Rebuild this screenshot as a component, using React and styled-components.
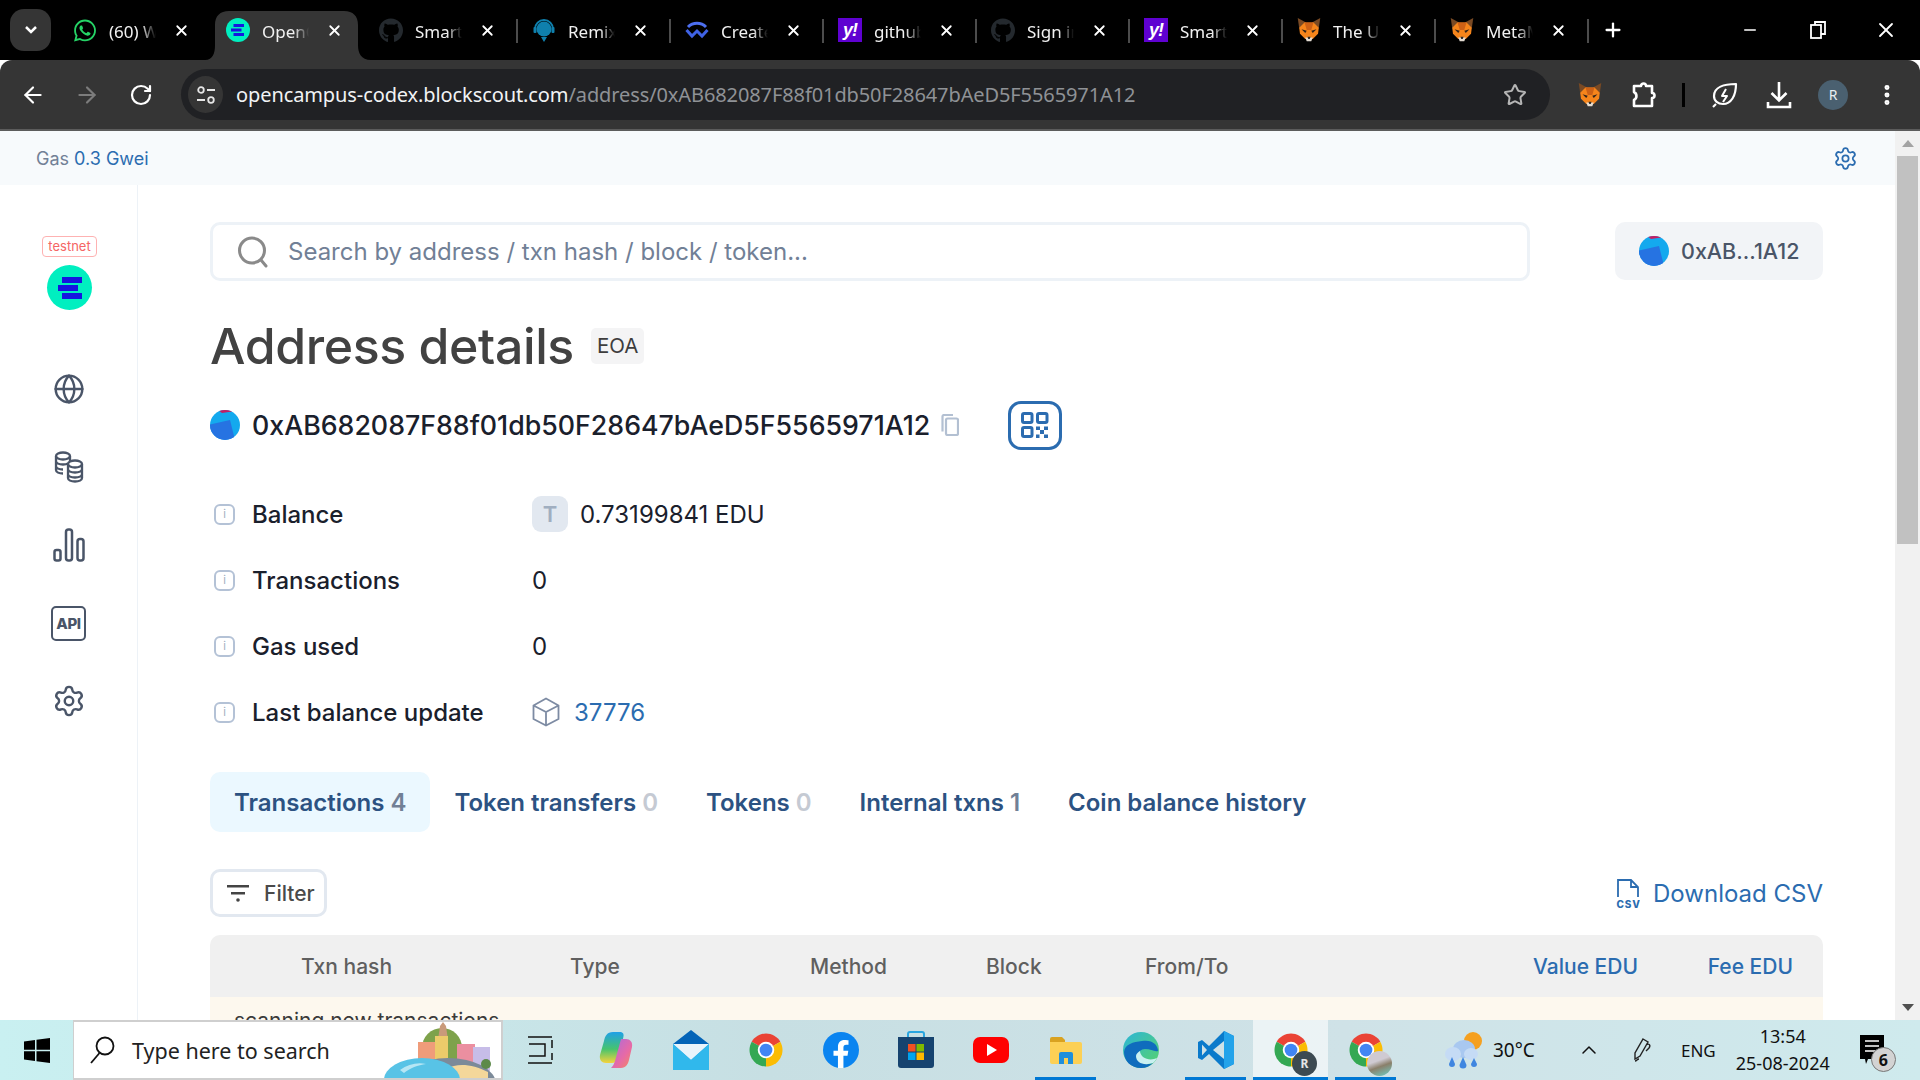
import React from 'react';
import styled, { createGlobalStyle } from 'styled-components';
import { ArrowLeft, ArrowRight, RotateCw, Star, X, Minus, Plus, Globe, Settings, MoreVertical, ChevronUp } from 'lucide-react';
import { FaGithub, FaWhatsapp, FaFacebookF } from 'react-icons/fa';

const GlobalStyle = createGlobalStyle`
  html, body { margin: 0; padding: 0; overflow: hidden; background: #fff; }
  * { box-sizing: border-box; }
`;

const Shell = styled.div`
  width: 1920px;
  height: 1080px;
  display: flex;
  flex-direction: column;
  overflow: hidden;
  font-family: Inter, "Liberation Sans", sans-serif;
`;

/* ---------- browser chrome ---------- */

const TabBar = styled.div`
  height: 60px;
  flex: none;
  background: #000;
  display: flex;
  align-items: flex-start;
  padding-left: 10px;
  font-family: "Noto Sans", sans-serif;
  color: #fff;
`;

const TabSearch = styled.div`
  width: 41px;
  height: 42px;
  margin: 9px 6px 0 0;
  border-radius: 14px;
  background: #353535;
  display: flex;
  align-items: center;
  justify-content: center;
`;

const Tab = styled.div`
  position: relative;
  width: 153px;
  height: 49px;
  margin-top: 11px;
  padding: 0 0 11px 16px;
  display: flex;
  align-items: center;
  &::before {
    content: "";
    position: absolute;
    left: 0;
    top: 8px;
    width: 2px;
    height: 24px;
    background: ${p => (p.$sep ? '#4c4c4c' : 'transparent')};
  }
  ${p => p.$active && `
    &::after {
      content: "";
      position: absolute;
      z-index: 0;
      left: -5px;
      top: 0;
      width: 166px;
      height: 49px;
      background: #353535;
      clip-path: path('M0 49C8 49 10 42 10 34V14C10 5 15 0 24 0H139C148 0 153 5 153 14V34C153 42 156 49 166 49Z');
    }
  `}
`;

const TabIcon = styled.span`
  position: relative;
  z-index: 1;
  width: 24px;
  height: 24px;
  flex: none;
  display: flex;
  align-items: center;
  justify-content: center;
`;

const TabTitle = styled.span`
  position: relative;
  z-index: 1;
  width: 47px;
  margin-left: 12px;
  font-size: 17px;
  line-height: 24px;
  margin-top: 4px;
  white-space: nowrap;
  overflow: hidden;
  color: #f1f1f1;
  -webkit-mask-image: linear-gradient(90deg, #000 68%, transparent 100%);
  mask-image: linear-gradient(90deg, #000 68%, transparent 100%);
`;

const TabClose = styled.span`
  position: relative;
  z-index: 1;
  margin-left: 17px;
  display: flex;
`;

const NewTab = styled.div`
  width: 52px;
  height: 60px;
  border-left: 0;
  display: flex;
  align-items: center;
  justify-content: center;
  position: relative;
  &::before {
    content: "";
    position: absolute;
    left: 0;
    top: 19px;
    width: 2px;
    height: 24px;
    background: #4c4c4c;
  }
`;

const WindowControls = styled.div`
  margin-left: auto;
  display: flex;
`;

const WindowButton = styled.div`
  width: 68px;
  height: 60px;
  display: flex;
  align-items: center;
  justify-content: center;
`;

const Toolbar = styled.div`
  height: 71px;
  flex: none;
  background: #353535;
  border-bottom: 2px solid #5c5c5c;
  border-radius: 12px 12px 0 0;
  display: flex;
  align-items: center;
  padding-left: 6px;
  font-family: "Noto Sans", sans-serif;
  position: relative;
  &::before {
    content: "";
    position: absolute;
    inset: 0 0 auto 0;
    height: 12px;
    z-index: -1;
    background: #000;
  }
`;

const ToolSlot = styled.div`
  width: 54px;
  height: 51px;
  flex: none;
  display: flex;
  align-items: center;
  justify-content: center;
  color: #fff;
`;

const Omnibox = styled.div`
  width: 1369px;
  height: 51px;
  margin: 0 13px;
  border-radius: 26px;
  background: #202124;
  display: flex;
  align-items: center;
  padding-left: 7px;
  flex: none;
`;

const SiteInfo = styled.div`
  width: 35px;
  height: 37px;
  border-radius: 50%;
  background: #353535;
  display: flex;
  align-items: center;
  justify-content: center;
  flex: none;
`;

const Url = styled.div`
  margin-left: 13px;
  font-size: 20px;
  line-height: 28px;
  color: #8f9296;
  white-space: nowrap;
  letter-spacing: -0.1px;
  b { font-weight: 400; color: #f1f3f4; }
`;

const StarSlot = styled.div`
  margin-left: auto;
  margin-right: 23px;
  display: flex;
`;

const ToolSep = styled.div`
  width: 3px;
  height: 24px;
  margin: 0 13px 0 11px;
  background: #000;
  flex: none;
`;

const Avatar = styled.div`
  width: 30px;
  height: 30px;
  border-radius: 50%;
  background: #4a6070;
  color: #e8eef2;
  font-size: 14px;
  display: flex;
  align-items: center;
  justify-content: center;
`;

/* ---------- page ---------- */

const Viewport = styled.div`
  flex: 1;
  min-height: 0;
  display: flex;
  background: #fff;
`;

const Page = styled.div`
  width: 1895px;
  display: flex;
  flex-direction: column;
  overflow: hidden;
`;

const Scrollbar = styled.div`
  width: 25px;
  flex: none;
  background: #f1f1f1;
  display: flex;
  flex-direction: column;
  align-items: center;
`;

const ScrollArrow = styled.div`
  height: 25px;
  flex: none;
  display: flex;
  align-items: center;
  justify-content: center;
  margin-top: ${p => (p.$down ? 'auto' : '0')};
  &::before {
    content: "";
    border-left: 6px solid transparent;
    border-right: 6px solid transparent;
    ${p => (p.$down ? 'border-top: 7px solid #505050;' : 'border-bottom: 7px solid #a3a3a3;')}
  }
`;

const ScrollThumb = styled.div`
  width: 21px;
  height: 388px;
  background: #c1c1c1;
`;

const GasBar = styled.div`
  height: 54px;
  flex: none;
  background: #f7fafc;
  display: flex;
  align-items: center;
  justify-content: space-between;
  padding: 0 37px 0 36px;
  font-size: 18px;
  color: #718096;
  span { color: #2b6cb0; }
`;

const Body = styled.div`
  flex: 1;
  min-height: 0;
  display: flex;
  overflow: hidden;
`;

const Sidebar = styled.nav`
  width: 138px;
  flex: none;
  border-right: 1px solid #edf2f7;
  display: flex;
  flex-direction: column;
  align-items: center;
  padding-top: 51px;
`;

const TestnetBadge = styled.div`
  height: 21px;
  width: 55px;
  margin-left: 2px;
  border: 1px solid #feb2b2;
  border-radius: 4px;
  color: #f56565;
  font-size: 13px;
  line-height: 19px;
  text-align: center;
`;

const Logo = styled.div`
  width: 45px;
  height: 45px;
  margin: 8px 0 0 2px;
  border-radius: 50%;
  background: #00efc0;
  display: flex;
  flex-direction: column;
  align-items: center;
  justify-content: center;
  gap: 2px;
`;

const LogoBar = styled.span`
  display: block;
  width: 20px;
  height: 6px;
  background: #1515e0;
  transform: translateX(${p => (p.$left ? '-2px' : '2px')});
`;

const NavList = styled.div`
  margin-top: 40px;
  display: flex;
  flex-direction: column;
`;

const NavItem = styled.div`
  width: 60px;
  height: 78px;
  display: flex;
  align-items: center;
  justify-content: center;
  color: #4a5568;
`;

const ApiMark = styled.div`
  width: 35px;
  height: 35px;
  border: 2px solid #4a5568;
  border-radius: 5px;
  color: #4a5568;
  font-size: 15px;
  font-weight: 800;
  letter-spacing: -0.3px;
  display: flex;
  align-items: center;
  justify-content: center;
`;

const Main = styled.main`
  flex: 1;
  min-width: 0;
  padding: 37px 72px 0 72px;
`;

const TopRow = styled.div`
  display: flex;
  justify-content: space-between;
`;

const SearchBox = styled.div`
  width: 1320px;
  height: 59px;
  border: 3px solid #edf2f7;
  border-radius: 10px;
  display: flex;
  align-items: center;
  padding-left: 24px;
  gap: 19px;
  font-size: 24px;
  color: #718096;
`;

const WalletButton = styled.div`
  width: 208px;
  height: 58px;
  border-radius: 10px;
  background: #f2f4f7;
  display: flex;
  align-items: center;
  padding-left: 24px;
  gap: 12px;
  font-size: 21.5px;
  font-weight: 500;
  color: #4a5568;
`;

const HeadingRow = styled.div`
  margin-top: 35px;
  height: 60px;
  display: flex;
  align-items: center;
`;

const Heading = styled.h1`
  margin: 0;
  font-size: 50px;
  font-weight: 500;
  line-height: 60px;
  letter-spacing: -0.4px;
  color: #424242;
`;

const Tag = styled.span`
  margin-left: 17px;
  height: 36px;
  padding: 0 6px;
  border-radius: 5px;
  background: #f4f4f5;
  font-size: 20.5px;
  line-height: 36px;
  color: #3d3d3d;
`;

const AddressRow = styled.div`
  margin-top: 24px;
  height: 50px;
  display: flex;
  align-items: center;
`;

const AddressText = styled.span`
  margin-left: 12px;
  font-size: 26.75px;
  font-weight: 500;
  color: #1a202c;
  white-space: nowrap;
`;

const CopyMark = styled.span`
  margin-left: 11px;
  display: flex;
`;

const QrButton = styled.div`
  margin-left: 49px;
  width: 54px;
  height: 49px;
  border: 3px solid #2b6cb0;
  border-radius: 13px;
  display: flex;
  align-items: center;
  justify-content: center;
`;

const Details = styled.div`
  margin-top: 31px;
  display: flex;
  flex-direction: column;
`;

const DetailRow = styled.div`
  height: 66px;
  display: grid;
  grid-template-columns: 322px 1fr;
  align-items: center;
  font-size: 24px;
  color: #1a202c;
`;

const DetailLabel = styled.div`
  display: flex;
  align-items: center;
  gap: 17px;
  padding-left: 4px;
  font-weight: 500;
`;

const InfoMark = styled.span`
  width: 21px;
  height: 21px;
  border: 2px solid #b4c2d6;
  border-radius: 6px;
  display: flex;
  align-items: center;
  justify-content: center;
  color: #a0aec0;
  font-size: 11px;
  font-weight: 400;
  line-height: 1;
`;

const DetailValue = styled.div`
  display: flex;
  align-items: center;
  gap: 12px;
`;

const TokenMark = styled.span`
  width: 36px;
  height: 36px;
  border-radius: 9px;
  background: #e2e8f0;
  color: #a0aec0;
  font-size: 22px;
  font-weight: 600;
  display: flex;
  align-items: center;
  justify-content: center;
`;

const BlockLink = styled.span`
  margin-left: 2px;
  color: #2b6cb0;
`;

const Tabs = styled.div`
  margin-top: 27px;
  display: flex;
`;

const PageTab = styled.div`
  height: 60px;
  padding: 0 24px;
  border-radius: 10px;
  background: ${p => (p.$active ? '#ebf8ff' : 'transparent')};
  display: flex;
  align-items: center;
  gap: 6px;
  font-size: 24px;
  font-weight: 600;
  color: #2c5282;
  white-space: nowrap;
`;

const TabCount = styled.span`
  color: ${p => (p.$muted ? '#c5cad3' : '#718096')};
`;

const ActionBar = styled.div`
  margin-top: 37px;
  height: 48px;
  display: flex;
  align-items: center;
  justify-content: space-between;
`;

const FilterButton = styled.div`
  width: 117px;
  height: 48px;
  border: 3px solid #e2e8f0;
  border-radius: 10px;
  display: flex;
  align-items: center;
  padding-left: 13px;
  gap: 14px;
  font-size: 21px;
  font-weight: 500;
  color: #4a4a4a;
`;

const DownloadLink = styled.div`
  display: flex;
  align-items: center;
  gap: 13px;
  font-size: 24px;
  color: #2b6cb0;
`;

const TableHead = styled.div`
  margin-top: 18px;
  width: 1613px;
  height: 62px;
  padding-left: 91px;
  background: #f0f0f0;
  border-radius: 10px 10px 0 0;
  display: grid;
  grid-template-columns: 269px 240px 176px 159px 251px 242px 155px;
  align-items: center;
  font-size: 21px;
  font-weight: 500;
  color: #5f5f5f;
`;

const HeadCell = styled.div`
  ${p => p.$right && `
    text-align: right;
    color: #2b6cb0;
  `}
`;

const NoticeRow = styled.div`
  width: 1613px;
  padding: 12px 24px;
  background: #fdf8ee;
  font-size: 21px;
  line-height: 24px;
  color: #3a3a3a;
`;

/* ---------- taskbar ---------- */

const Taskbar = styled.div`
  height: 60px;
  flex: none;
  display: flex;
  background: linear-gradient(90deg, #c9f0f1 0%, #c7dfe3 40%, #cfe2e7 70%, #cfeaed 100%);
  font-family: "Noto Sans", sans-serif;
  color: #111;
`;

const StartButton = styled.div`
  width: 73px;
  display: flex;
  align-items: center;
  justify-content: center;
  flex: none;
`;

const TaskSearch = styled.div`
  position: relative;
  width: 430px;
  flex: none;
  background: #fff;
  border: 2px solid #cfcfcf;
  border-left-width: 1px;
  display: flex;
  align-items: center;
  padding-left: 15px;
  gap: 17px;
  font-size: 21.5px;
  color: #222;
  overflow: hidden;
`;

const SearchArt = styled.svg`
  position: absolute;
  right: 5px;
  top: 0;
`;

const TaskIcons = styled.div`
  display: flex;
  flex: none;
`;

const TaskSlot = styled.div`
  position: relative;
  width: 75px;
  height: 60px;
  display: flex;
  align-items: center;
  justify-content: center;
  background: ${p => (p.$active ? 'rgba(255,255,255,0.6)' : 'transparent')};
  ${p => p.$open && `
    &::after {
      content: "";
      position: absolute;
      left: ${p.$active ? '0' : '7px'};
      right: ${p.$active ? '0' : '7px'};
      bottom: 0;
      height: 3px;
      background: #0078d4;
    }
  `}
`;

const ProfileBadge = styled.span`
  position: absolute;
  left: 39px;
  top: 31px;
  width: 25px;
  height: 25px;
  border-radius: 50%;
  background: ${p => p.$bg};
  color: #e6e6e6;
  font-size: 12px;
  font-weight: 700;
  display: flex;
  align-items: center;
  justify-content: center;
`;

const Tray = styled.div`
  display: flex;
  align-items: center;
  padding-left: 41px;
  flex: 1;
`;

const Temp = styled.span`
  margin-left: 11px;
  width: 44px;
  font-size: 19px;
  white-space: nowrap;
`;

const TraySlot = styled.span`
  margin-left: ${p => p.$gap}px;
  display: flex;
  flex: none;
  font-size: 17px;
`;

const Clock = styled.div`
  margin-left: 17px;
  width: 100px;
  text-align: center;
  font-size: 18px;
  line-height: 27px;
  white-space: nowrap;
`;

const NotifyWrap = styled.div`
  position: relative;
  margin-left: 27px;
  width: 26px;
  height: 30px;
`;

const NotifyCount = styled.span`
  position: absolute;
  left: 11px;
  top: 12px;
  width: 25px;
  height: 25px;
  border-radius: 50%;
  border: 1px solid #777;
  background: #d3d3d3;
  font-size: 16px;
  font-weight: 700;
  display: flex;
  align-items: center;
  justify-content: center;
`;

const YahooMark = styled.span`
  width: 24px;
  height: 24px;
  background: #5f01d1;
  color: #fff;
  font-size: 18px;
  font-weight: 800;
  font-style: italic;
  letter-spacing: -1px;
  display: flex;
  align-items: center;
  justify-content: center;
  font-family: "Liberation Sans", sans-serif;
`;

/* ---------- drawings ---------- */

const Fox = ({ size = 24 }) => (
  <svg width={size} height={size} viewBox="0 0 32 32">
    <polygon points="1,0 12,6 10,12 3,14" fill="#7a4a24" />
    <polygon points="31,0 20,6 22,12 29,14" fill="#7a4a24" />
    <polygon points="3,13 10,6 22,6 29,13 28,21 21,28 11,28 4,21" fill="#f6851b" />
    <polygon points="10,6 22,6 19,16 13,16" fill="#cd6116" />
    <polygon points="6,15 13,17 11,20" fill="#33241a" />
    <polygon points="26,15 19,17 21,20" fill="#33241a" />
    <polygon points="11,26 21,26 19,31 13,31" fill="#e4dcd2" />
    <polygon points="14,25 18,25 17,28 15,28" fill="#2a2a2a" />
  </svg>
);

const ChromeLogo = ({ size = 36 }) => (
  <svg width={size} height={size} viewBox="0 0 48 48">
    <path d="M24 24L43.05 13A22 22 0 0 0 4.95 13Z" fill="#ea4335" />
    <path d="M24 24L43.05 13A22 22 0 0 1 24 46Z" fill="#fbbc04" />
    <path d="M24 24L24 46A22 22 0 0 1 4.95 13Z" fill="#34a853" />
    <circle cx="24" cy="24" r="11" fill="#fff" />
    <circle cx="24" cy="24" r="8.5" fill="#4285f4" />
  </svg>
);

const OpenCampusMark = () => (
  <svg width="24" height="24" viewBox="0 0 24 24">
    <circle cx="12" cy="12" r="12" fill="#00efc0" />
    <rect x="7.500" y="6" width="10.500" height="3" fill="#1515e0" />
    <rect x="5" y="10.500" width="10.500" height="3" fill="#1515e0" />
    <rect x="7.500" y="15" width="10.500" height="3" fill="#1515e0" />
  </svg>
);

const RemixMark = () => (
  <svg width="24" height="26" viewBox="0 0 24 26">
    <path d="M3 12a9 9 0 0 1 18 0" fill="none" stroke="#0f80ad" strokeWidth="2" />
    <circle cx="12" cy="12" r="7.5" fill="#0f80ad" />
    <rect x="1.5" y="10" width="3" height="6" rx="1" fill="#0f80ad" />
    <rect x="19.5" y="10" width="3" height="6" rx="1" fill="#0f80ad" />
    <path d="M9 20l3 5 3-5z" fill="#0f80ad" />
  </svg>
);

const WalletMark = () => (
  <svg width="24" height="18" viewBox="0 0 24 18" fill="none" strokeWidth="3">
    <path d="M3 6C8 1 16 1 21 6" stroke="#4d6ff0" />
    <path d="M1.5 9L7 15l5-5 5 5 5.5-6" stroke="#3f62e4" />
  </svg>
);

const SearchGlyph = () => (
  <svg width="32" height="32" viewBox="0 0 32 32" fill="none" stroke="#8a8a8a" strokeWidth="3" strokeLinecap="round">
    <circle cx="15" cy="14.5" r="12.5" />
    <path d="M24 24l5 6" />
  </svg>
);

const AddressAvatar = ({ size = 30 }) => (
  <svg width={size} height={size} viewBox="0 0 30 30" style={{ borderRadius: '50%', flex: 'none' }}>
    <rect width="30" height="30" fill="#14a9ee" />
    <path d="M8 0h14v1.5L12 3z" fill="#c41e63" />
    <path d="M-2 15L20 10l5 20H0z" fill="#2673e2" />
    <path d="M22 30l8-9v9z" fill="#0b6a6e" />
  </svg>
);

const CoinsGlyph = () => (
  <svg width="30" height="32" viewBox="0 0 30 32" fill="none" stroke="currentColor" strokeWidth="2.300">
    <ellipse cx="9" cy="5" rx="7" ry="3.5" />
    <path d="M2 5v14c0 2 3 3.5 7 3.5M16 5v5M2 10c0 2 3 3.5 7 3.5 2 0 4-.4 5-1M2 15c0 2 3 3.5 7 3.5" />
    <ellipse cx="21" cy="13" rx="7" ry="3.5" />
    <path d="M14 13v14c0 2 3 3.5 7 3.5s7-1.500 7-3.500V13M14 18c0 2 3 3.500 7 3.500s7-1.500 7-3.500M14 23c0 2 3 3.500 7 3.500s7-1.500 7-3.500" />
  </svg>
);

const ChartGlyph = () => (
  <svg width="32" height="34" viewBox="0 0 32 34" fill="none" stroke="currentColor" strokeWidth="2.500">
    <rect x="1.500" y="22" width="6" height="10.500" rx="2" />
    <rect x="13" y="1.500" width="6" height="31" rx="2.500" />
    <rect x="24.500" y="11" width="6" height="21.500" rx="2.500" />
  </svg>
);

const CopyGlyph = () => (
  <svg width="18" height="22" viewBox="0 0 18 22" fill="none" stroke="#b3c0d2" strokeWidth="2.200">
    <rect x="5" y="4.500" width="12" height="16.500" rx="1.500" />
    <path d="M1.500 17.500V2.500A1.500 1.500 0 0 1 3 1h9" />
  </svg>
);

const QrGlyph = () => (
  <svg width="28" height="26" viewBox="0 0 28 26" fill="#2b6cb0">
    <rect x="1.500" y="1.500" width="9.500" height="9" rx="1.500" fill="none" stroke="#2b6cb0" strokeWidth="3" />
    <rect x="16.500" y="1.500" width="9.500" height="9" rx="1.500" fill="none" stroke="#2b6cb0" strokeWidth="3" />
    <rect x="1.500" y="15.500" width="9.500" height="9" rx="1.500" fill="none" stroke="#2b6cb0" strokeWidth="3" />
    <rect x="15" y="14.500" width="4" height="3.500" />
    <rect x="23" y="14.500" width="4" height="3.500" />
    <rect x="19" y="18" width="4" height="4" />
    <rect x="15" y="22.500" width="3.500" height="3.500" />
    <rect x="23" y="22.500" width="4" height="3.500" />
  </svg>
);

const CubeGlyph = () => (
  <svg width="28" height="30" viewBox="0 0 28 30" fill="none" stroke="#7d8ba3" strokeWidth="1.800">
    <path d="M14 1.500L26.500 8.500V22L14 28.500 1.500 22V8.500zM1.500 8.500L14 15l12.500-6.500M14 15v13.500" />
  </svg>
);

const FilterGlyph = () => (
  <svg width="24" height="20" viewBox="0 0 24 20" fill="#444">
    <rect x="1" y="2" width="22" height="2.500" />
    <rect x="5" y="9" width="14" height="2.500" />
    <circle cx="12" cy="17" r="1.800" />
  </svg>
);

const CsvGlyph = () => (
  <svg width="24" height="31" viewBox="0 0 24 31" fill="none" stroke="#2b6cb0" strokeWidth="1.800">
    <path d="M2 19V2h13l7 7v10M15 2v7h7" />
    <text x="0.500" y="30" fontSize="10" fontWeight="800" fill="#2b6cb0" stroke="none" fontFamily="Inter" letterSpacing="0.800">CSV</text>
  </svg>
);

const SiteInfoGlyph = () => (
  <svg width="20" height="20" viewBox="0 0 20 20" fill="none" stroke="#e6e6e6" strokeWidth="1.800">
    <circle cx="5" cy="5" r="2.800" />
    <path d="M11 5h8M1 15h8" />
    <circle cx="15" cy="15" r="2.800" />
  </svg>
);

const PuzzleGlyph = () => (
  <svg width="28" height="28" viewBox="0 0 28 28" fill="none" stroke="#fff" strokeWidth="2.600" strokeLinejoin="round">
    <path d="M4 5H11a2.500 2.500 0 0 1 5 0H22V12a2.500 2.500 0 0 1 0 5V25H4V19a4.500 4.500 0 0 0 0-8z" />
  </svg>
);

const LeafGlyph = () => (
  <svg width="26" height="26" viewBox="0 0 26 26" fill="none" stroke="#fff" strokeWidth="2.200" strokeLinejoin="round">
    <path d="M24 2C12 2 2 5 2 14c0 5 4 8 9 8 8 0 13-8 13-20z" />
    <path d="M14 7l-4 7h5l-4 6" strokeWidth="2" />
    <path d="M1 25l3-3" />
  </svg>
);

const DownloadGlyph = () => (
  <svg width="26" height="28" viewBox="0 0 26 28" fill="none" stroke="#fff" strokeWidth="2.600">
    <path d="M13 1v18M5.500 12l7.500 7.500L20.500 12M2 21v5h22v-5" />
  </svg>
);

const WindowsLogo = () => (
  <svg width="26" height="25" viewBox="0 0 26 25" fill="#000">
    <path d="M0 3.500L11 2v9.800H0zM12.500 1.800L26 0v11.800H12.500zM0 13.200h11V23L0 21.500zM12.500 13.200H26V25l-13.500-1.800z" />
  </svg>
);

const TaskSearchGlyph = () => (
  <svg width="26" height="28" viewBox="0 0 26 28" fill="none" stroke="#111" strokeWidth="1.800">
    <circle cx="16" cy="10" r="8.500" />
    <path d="M10.500 17L2 27" />
  </svg>
);

const CityArt = () => (
  <SearchArt width="120" height="56" viewBox="0 0 120 56">
    <circle cx="66" cy="26" r="20" fill="#7ea24b" />
    <path d="M64 4l3-4 3 4 2 14h-10z" fill="#c99a7a" />
    <rect x="42" y="20" width="19" height="24" fill="#ef9c7a" />
    <rect x="59" y="14" width="13" height="28" fill="#eccb6a" />
    <rect x="81" y="22" width="18" height="24" fill="#eb8fa0" />
    <rect x="97" y="25" width="17" height="24" fill="#c7bde8" />
    <ellipse cx="72" cy="62" rx="48" ry="26" fill="#7c8a99" />
    <path d="M60 56C68 42 90 38 112 50v6z" fill="#f4d79a" />
    <ellipse cx="46" cy="58" rx="38" ry="22" fill="#58c3e6" />
    <path d="M24 48c8-6 18-8 26-6-8 1-16 4-22 9z" fill="#b6e6f4" />
    <circle cx="110" cy="42" r="5" fill="#5d8a4a" />
  </SearchArt>
);

const TaskViewGlyph = () => (
  <svg width="26" height="28" viewBox="0 0 26 28" fill="none" stroke="#111" strokeWidth="1.500">
    <path d="M0 1h24M0 27h24M1 8h16v12H1M24 4v8M24 17v7" />
  </svg>
);

const CopilotGlyph = () => (
  <svg width="34" height="38" viewBox="0 0 34 38">
    <defs>
      <linearGradient id="copA" x1="0" y1="0" x2="0" y2="1">
        <stop offset="0" stopColor="#1fa0e8" />
        <stop offset=".55" stopColor="#46c46e" />
        <stop offset="1" stopColor="#f5d33c" />
      </linearGradient>
      <linearGradient id="copB" x1="0" y1="0" x2="1" y2="1">
        <stop offset="0" stopColor="#a86ce0" />
        <stop offset=".6" stopColor="#e76aa6" />
        <stop offset="1" stopColor="#f48a5a" />
      </linearGradient>
    </defs>
    <path d="M22 1H14C8 1 6 5 5 10L1 24c-1 5 2 8 6 8h6c3 0 5-2 6-6l5-18c1-4 1-6-2-7z" fill="url(#copA)" />
    <path d="M12 37h10c5 0 7-4 8-8l3-13c1-5-2-8-6-8h-5l-6 22c-1 3-2 5-4 7z" fill="url(#copB)" />
  </svg>
);

const MailGlyph = () => (
  <svg width="36" height="40" viewBox="0 0 36 40">
    <path d="M0 14L18 0l18 14v26H0z" fill="#0364b8" />
    <path d="M0 14h36v26H0z" fill="#28a8ea" />
    <path d="M0 14h36L18 30z" fill="#e8f4fb" />
    <path d="M0 40V14l18 16 18-16v26z" fill="#30b8ec" />
  </svg>
);

const FacebookBadge = styled.span`
  width: 36px;
  height: 36px;
  border-radius: 50%;
  background: #0a84f0;
  display: flex;
  align-items: flex-end;
  justify-content: center;
  color: #fff;
`;

const StoreGlyph = () => (
  <svg width="36" height="38" viewBox="0 0 36 38">
    <path d="M10 6V3a2 2 0 0 1 2-2h12a2 2 0 0 1 2 2v3" fill="none" stroke="#29a5e0" strokeWidth="2" />
    <path d="M0 6h36v28a3 3 0 0 1-3 3H3a3 3 0 0 1-3-3z" fill="#16436f" />
    <rect x="10" y="13" width="7.500" height="7.500" fill="#f25022" />
    <rect x="18.500" y="13" width="7.500" height="7.500" fill="#7fba00" />
    <rect x="10" y="21.500" width="7.500" height="7.500" fill="#00a4ef" />
    <rect x="18.500" y="21.500" width="7.500" height="7.500" fill="#ffb900" />
  </svg>
);

const YoutubeGlyph = () => (
  <svg width="36" height="26" viewBox="0 0 36 26">
    <rect width="36" height="26" rx="7" fill="#ff0000" />
    <path d="M14 7l10 6-10 6z" fill="#fff" />
  </svg>
);

const ExplorerGlyph = () => (
  <svg width="32" height="28" viewBox="0 0 32 28">
    <path d="M0 3a2 2 0 0 1 2-2h10l3 3v4H0z" fill="#d9a220" />
    <path d="M0 6h30a2 2 0 0 1 2 2v18a2 2 0 0 1-2 2H2a2 2 0 0 1-2-2z" fill="#fcd055" />
    <path d="M9 28V18a2 2 0 0 1 2-2h10a2 2 0 0 1 2 2v10h-5v-6h-4v6z" fill="#1f8fdc" />
  </svg>
);

const EdgeGlyph = () => (
  <svg width="36" height="36" viewBox="0 0 36 36">
    <defs>
      <linearGradient id="edgeTop" x1="0" y1="0" x2="1" y2="1">
        <stop offset="0" stopColor="#2bb5d8" />
        <stop offset="1" stopColor="#59d36a" />
      </linearGradient>
    </defs>
    <circle cx="18" cy="18" r="18" fill="url(#edgeTop)" />
    <path d="M1 20C1 29 8 36 18 36c5 0 9-2 12-5-7 3-15 0-15-7 0-4 3-7 7-7 6 0 9 3 13 2 0-2-1-5-3-7-3-3-8-4-13-3C10 10 2 12 1 20z" fill="#0f6cbd" />
    <path d="M13 24c0 7 8 10 17 7 2-2 3-3 4-5-4 2-10 2-14-1-2-2-3-4-3-6-2 1-4 3-4 5z" fill="#c9f0f1" />
  </svg>
);

const VsCodeGlyph = () => (
  <svg width="36" height="38" viewBox="0 0 36 38">
    <path d="M26 0l10 5v28l-10 5-15-15-7 6-4-2V11l4-2 7 6z" fill="#0a7acb" />
    <path d="M26 10L15 19l11 9z" fill="#cfe2e7" />
    <path d="M4 13.500v11l5-5.500z" fill="#cfe2e7" />
    <path d="M26 0l10 5v28l-10 5z" fill="#23a3ea" />
  </svg>
);

const WeatherGlyph = () => (
  <svg width="38" height="38" viewBox="0 0 38 38">
    <circle cx="29" cy="10" r="9" fill="#f5a020" />
    <ellipse cx="20" cy="18" rx="11" ry="9" fill="#a9c8f0" />
    <ellipse cx="9" cy="23" rx="8" ry="7" fill="#c5dbf5" />
    <ellipse cx="27" cy="23" rx="7" ry="6" fill="#c5dbf5" />
    <path d="M8 26l3 7a3 3 0 1 1-6 0zM19 26l3.500 8a3.500 3.500 0 1 1-7 0zM30 27l3 6a3 3 0 1 1-6 0z" fill="#3f86e0" />
  </svg>
);

const PenGlyph = () => (
  <svg width="22" height="26" viewBox="0 0 22 26" fill="none" stroke="#222" strokeWidth="1.400">
    <path d="M12 2l5 3-8 14-5 3v-6zM15 8c3-2 5 0 3 3l-3 3M4 24c2 0 2-2 4-2" />
  </svg>
);

const NotifyGlyph = () => (
  <svg width="26" height="30" viewBox="0 0 26 30">
    <path d="M0 0h24v24H8l-2 5-1-5H0z" fill="#000" />
    <path d="M5 6h14M5 11h14M5 16h14" stroke="#fff" strokeWidth="1.600" />
  </svg>
);

const Restore = () => (
  <svg width="16" height="18" viewBox="0 0 16 18" fill="none" stroke="#fff" strokeWidth="1.800">
    <rect x="1" y="4" width="10" height="13" />
    <path d="M5 4V1h10v12h-4" />
  </svg>
);

const tabs = [
  { title: '(60) WhatsApp', icon: <FaWhatsapp size={25} color="#25d366" /> },
  { title: 'OpenCampus', icon: <OpenCampusMark />, active: true },
  { title: 'Smart Contract', icon: <FaGithub size={25} color="#24292e" /> },
  { title: 'Remix - IDE', icon: <RemixMark />, sep: true },
  { title: 'Create', icon: <WalletMark />, sep: true },
  { title: 'github', icon: <YahooMark>y!</YahooMark>, sep: true },
  { title: 'Sign in', icon: <FaGithub size={25} color="#24292e" />, sep: true },
  { title: 'Smart', icon: <YahooMark>y!</YahooMark>, sep: true },
  { title: 'The U', icon: <Fox />, sep: true },
  { title: 'MetaMask', icon: <Fox />, sep: true },
];

const details = [
  { label: 'Balance', value: <><TokenMark>T</TokenMark>0.73199841 EDU</> },
  { label: 'Transactions', value: '0' },
  { label: 'Gas used', value: '0' },
  { label: 'Last balance update', value: <><CubeGlyph /><BlockLink>37776</BlockLink></> },
];

const pageTabs = [
  { label: 'Transactions', count: '4', active: true },
  { label: 'Token transfers', count: '0', muted: true },
  { label: 'Tokens', count: '0', muted: true },
  { label: 'Internal txns', count: '1' },
  { label: 'Coin balance history' },
];

const taskIcons = [
  { icon: <TaskViewGlyph /> },
  { icon: <CopilotGlyph /> },
  { icon: <MailGlyph /> },
  { icon: <ChromeLogo /> },
  { icon: <FacebookBadge><FaFacebookF size={28} /></FacebookBadge> },
  { icon: <StoreGlyph /> },
  { icon: <YoutubeGlyph /> },
  { icon: <ExplorerGlyph />, open: true },
  { icon: <EdgeGlyph /> },
  { icon: <VsCodeGlyph />, open: true },
  { icon: <ChromeLogo />, open: true, active: true, badge: 'R', badgeBg: '#3d4a52' },
  { icon: <ChromeLogo />, open: true, badge: '', badgeBg: 'linear-gradient(160deg,#cfcad2 40%,#8a7f6a 60%,#6fd0c8)' },
];

export default function App() {
  return (
    <Shell>
      <GlobalStyle />
      <TabBar>
        <TabSearch>
          <svg width="14" height="10" viewBox="0 0 14 10" fill="none" stroke="#fff" strokeWidth="2.500"><path d="M2 2l5 5 5-5" /></svg>
        </TabSearch>
        {tabs.map(t => (
          <Tab key={t.title} $active={t.active} $sep={t.sep}>
            <TabIcon>{t.icon}</TabIcon>
            <TabTitle>{t.title}</TabTitle>
            <TabClose><X size={17} strokeWidth={2.5} color="#fff" /></TabClose>
          </Tab>
        ))}
        <NewTab><Plus size={22} strokeWidth={2.5} color="#fff" /></NewTab>
        <WindowControls>
          <WindowButton><Minus size={18} strokeWidth={2} color="#fff" /></WindowButton>
          <WindowButton><Restore /></WindowButton>
          <WindowButton><X size={24} strokeWidth={1.8} color="#fff" /></WindowButton>
        </WindowControls>
      </TabBar>

      <Toolbar>
        <ToolSlot><ArrowLeft size={26} strokeWidth={2} /></ToolSlot>
        <ToolSlot><ArrowRight size={26} strokeWidth={2} color="#7c7c7c" /></ToolSlot>
        <ToolSlot><RotateCw size={24} strokeWidth={2.2} /></ToolSlot>
        <Omnibox>
          <SiteInfo><SiteInfoGlyph /></SiteInfo>
          <Url><b>opencampus-codex.blockscout.com</b>/address/0xAB682087F88f01db50F28647bAeD5F5565971A12</Url>
          <StarSlot><Star size={24} strokeWidth={2} color="#b5b5b5" /></StarSlot>
        </Omnibox>
        <ToolSlot><Fox /></ToolSlot>
        <ToolSlot><PuzzleGlyph /></ToolSlot>
        <ToolSep />
        <ToolSlot><LeafGlyph /></ToolSlot>
        <ToolSlot><DownloadGlyph /></ToolSlot>
        <ToolSlot><Avatar>R</Avatar></ToolSlot>
        <ToolSlot><MoreVertical size={26} strokeWidth={2.6} /></ToolSlot>
      </Toolbar>

      <Viewport>
        <Page>
          <GasBar>
            <div>Gas <span>0.3 Gwei</span></div>
            <Settings size={25} strokeWidth={1.7} color="#2b6cb0" />
          </GasBar>
          <Body>
            <Sidebar>
              <TestnetBadge>testnet</TestnetBadge>
              <Logo>
                <LogoBar />
                <LogoBar $left />
                <LogoBar />
              </Logo>
              <NavList>
                <NavItem><Globe size={32} strokeWidth={1.8} /></NavItem>
                <NavItem><CoinsGlyph /></NavItem>
                <NavItem><ChartGlyph /></NavItem>
                <NavItem><ApiMark>API</ApiMark></NavItem>
                <NavItem><Settings size={34} strokeWidth={1.7} /></NavItem>
              </NavList>
            </Sidebar>
            <Main>
              <TopRow>
                <SearchBox>
                  <SearchGlyph />
                  Search by address / txn hash / block / token...
                </SearchBox>
                <WalletButton>
                  <AddressAvatar />
                  0xAB...1A12
                </WalletButton>
              </TopRow>
              <HeadingRow>
                <Heading>Address details</Heading>
                <Tag>EOA</Tag>
              </HeadingRow>
              <AddressRow>
                <AddressAvatar />
                <AddressText>0xAB682087F88f01db50F28647bAeD5F5565971A12</AddressText>
                <CopyMark><CopyGlyph /></CopyMark>
                <QrButton><QrGlyph /></QrButton>
              </AddressRow>
              <Details>
                {details.map(d => (
                  <DetailRow key={d.label}>
                    <DetailLabel><InfoMark>i</InfoMark>{d.label}</DetailLabel>
                    <DetailValue>{d.value}</DetailValue>
                  </DetailRow>
                ))}
              </Details>
              <Tabs>
                {pageTabs.map(t => (
                  <PageTab key={t.label} $active={t.active}>
                    {t.label}
                    {t.count && <TabCount $muted={t.muted}>{t.count}</TabCount>}
                  </PageTab>
                ))}
              </Tabs>
              <ActionBar>
                <FilterButton><FilterGlyph />Filter</FilterButton>
                <DownloadLink><CsvGlyph />Download CSV</DownloadLink>
              </ActionBar>
              <TableHead>
                <HeadCell>Txn hash</HeadCell>
                <HeadCell>Type</HeadCell>
                <HeadCell>Method</HeadCell>
                <HeadCell>Block</HeadCell>
                <HeadCell>From/To</HeadCell>
                <HeadCell $right>Value EDU</HeadCell>
                <HeadCell $right>Fee EDU</HeadCell>
              </TableHead>
              <NoticeRow>scanning new transactions</NoticeRow>
            </Main>
          </Body>
        </Page>
        <Scrollbar>
          <ScrollArrow />
          <ScrollThumb />
          <ScrollArrow $down />
        </Scrollbar>
      </Viewport>

      <Taskbar>
        <StartButton><WindowsLogo /></StartButton>
        <TaskSearch>
          <TaskSearchGlyph />
          Type here to search
          <CityArt />
        </TaskSearch>
        <TaskIcons>
          {taskIcons.map((t, i) => (
            <TaskSlot key={i} $open={t.open} $active={t.active}>
              {t.icon}
              {t.badge !== undefined && <ProfileBadge $bg={t.badgeBg}>{t.badge}</ProfileBadge>}
            </TaskSlot>
          ))}
        </TaskIcons>
        <Tray>
          <WeatherGlyph />
          <Temp>30°C</Temp>
          <TraySlot $gap={40}><ChevronUp size={24} strokeWidth={1.5} /></TraySlot>
          <TraySlot $gap={30}><PenGlyph /></TraySlot>
          <TraySlot $gap={28}>ENG</TraySlot>
          <Clock>13:54<br />25-08-2024</Clock>
          <NotifyWrap>
            <NotifyGlyph />
            <NotifyCount>6</NotifyCount>
          </NotifyWrap>
        </Tray>
      </Taskbar>
    </Shell>
  );
}
